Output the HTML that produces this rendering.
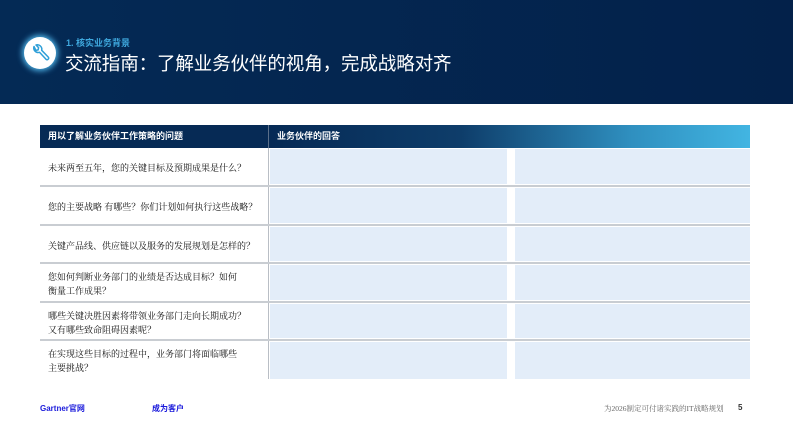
<!DOCTYPE html>
<html><head><meta charset="utf-8"><style>
*{margin:0;padding:0;box-sizing:border-box}
body{width:793px;height:446px;background:#fff;font-family:"Liberation Sans","Noto Sans CJK SC",sans-serif;position:relative;overflow:hidden}
.hdr{position:absolute;left:0;top:0;width:793px;height:104px;background:linear-gradient(90deg,#042a55,#03214a)}
.icon{position:absolute;left:24px;top:37px;width:32px;height:32px;border-radius:50%;background:#fff;box-shadow:0 0 6px 2px #4fb4e8}
.sub{position:absolute;left:66px;top:36px;font-size:9px;font-weight:bold;color:#3fa9df}
.title{position:absolute;left:65px;top:50px;font-size:18.5px;color:#fff;letter-spacing:-0.1px}
.th{position:absolute;top:125px;height:23px;font-size:9px;font-weight:bold;color:#fff;line-height:23px}
.q{position:absolute;left:40px;width:228px;font-size:9px;color:#111;padding-left:8px;display:flex;align-items:center;line-height:14px;white-space:nowrap;font-family:"Liberation Serif","Noto Serif CJK SC",serif;padding-top:2px}
.c{position:absolute;background:#e3edf9}
.line{position:absolute;left:40px;width:710px;height:2px;background:#c9cdd2}
.foot{position:absolute;top:403px;font-size:8px;font-weight:bold;color:#1a1adb}
</style></head><body>
<div class="hdr"></div>
<div class="icon"><svg width="32" height="32" viewBox="0 0 32 32"><path d="M10 9.5a4.5 4.5 0 0 0 5.5 5.8l6.5 7a1.6 1.6 0 0 0 2.3-2.2l-6.6-6.8A4.5 4.5 0 0 0 12 8l2.6 2.7-.5 2.2-2.2.5z" fill="none" stroke="#2e9fd8" stroke-width="1.5" stroke-linejoin="round"/></svg></div>
<div class="sub">1. 核实业务背景</div>
<div class="title">交流指南：了解业务伙伴的视角，完成战略对齐</div>
<div class="th" style="left:40px;width:228px;background:#062a55;padding-left:8px">用以了解业务伙伴工作策略的问题</div>
<div class="th" style="left:268px;width:482px;background:linear-gradient(90deg,#062a55,#0e3d6a 40%,#2f8fbf 75%,#42b5e2);padding-left:8px;border-left:1px solid #5a6f8a">业务伙伴的回答</div>
<div style="position:absolute;left:268px;top:148px;width:1px;height:231px;background:#b9bec5"></div>
<div class="q" style="top:148px;height:38px">未来两至五年，您的关键目标及预期成果是什么？</div>
<div class="q" style="top:187px;height:38px">您的主要战略 有哪些？你们计划如何执行这些战略？</div>
<div class="q" style="top:226px;height:37px">关键产品线、供应链以及服务的发展规划是怎样的？</div>
<div class="q" style="top:264px;height:38px">您如何判断业务部门的业绩是否达成目标？如何<br>衡量工作成果？</div>
<div class="q" style="top:303px;height:37px">哪些关键决胜因素将带领业务部门走向长期成功？<br>又有哪些致命阻碍因素呢？</div>
<div class="q" style="top:341px;height:38px">在实现这些目标的过程中，业务部门将面临哪些<br>主要挑战？</div>
<div class="line" style="top:185px"></div>
<div class="line" style="top:224px"></div>
<div class="line" style="top:262px"></div>
<div class="line" style="top:301px"></div>
<div class="line" style="top:339px"></div>
<div class="c" style="left:270px;top:149px;width:237px;height:35px"></div><div class="c" style="left:515px;top:149px;width:235px;height:35px"></div>
<div class="c" style="left:270px;top:188px;width:237px;height:35px"></div><div class="c" style="left:515px;top:188px;width:235px;height:35px"></div>
<div class="c" style="left:270px;top:227px;width:237px;height:34px"></div><div class="c" style="left:515px;top:227px;width:235px;height:34px"></div>
<div class="c" style="left:270px;top:265px;width:237px;height:35px"></div><div class="c" style="left:515px;top:265px;width:235px;height:35px"></div>
<div class="c" style="left:270px;top:304px;width:237px;height:34px"></div><div class="c" style="left:515px;top:304px;width:235px;height:34px"></div>
<div class="c" style="left:270px;top:342px;width:237px;height:37px"></div><div class="c" style="left:515px;top:342px;width:235px;height:37px"></div>
<div class="foot" style="left:40px">Gartner官网</div>
<div class="foot" style="left:152px">成为客户</div>
<div style="position:absolute;left:604px;top:403px;font-size:7.5px;color:#666;font-family:'Liberation Serif','Noto Serif CJK SC',serif">为2026制定可付诸实践的IT战略规划</div>
<div style="position:absolute;left:738px;top:403px;font-size:8px;font-weight:bold;color:#333">5</div>
</body></html>
